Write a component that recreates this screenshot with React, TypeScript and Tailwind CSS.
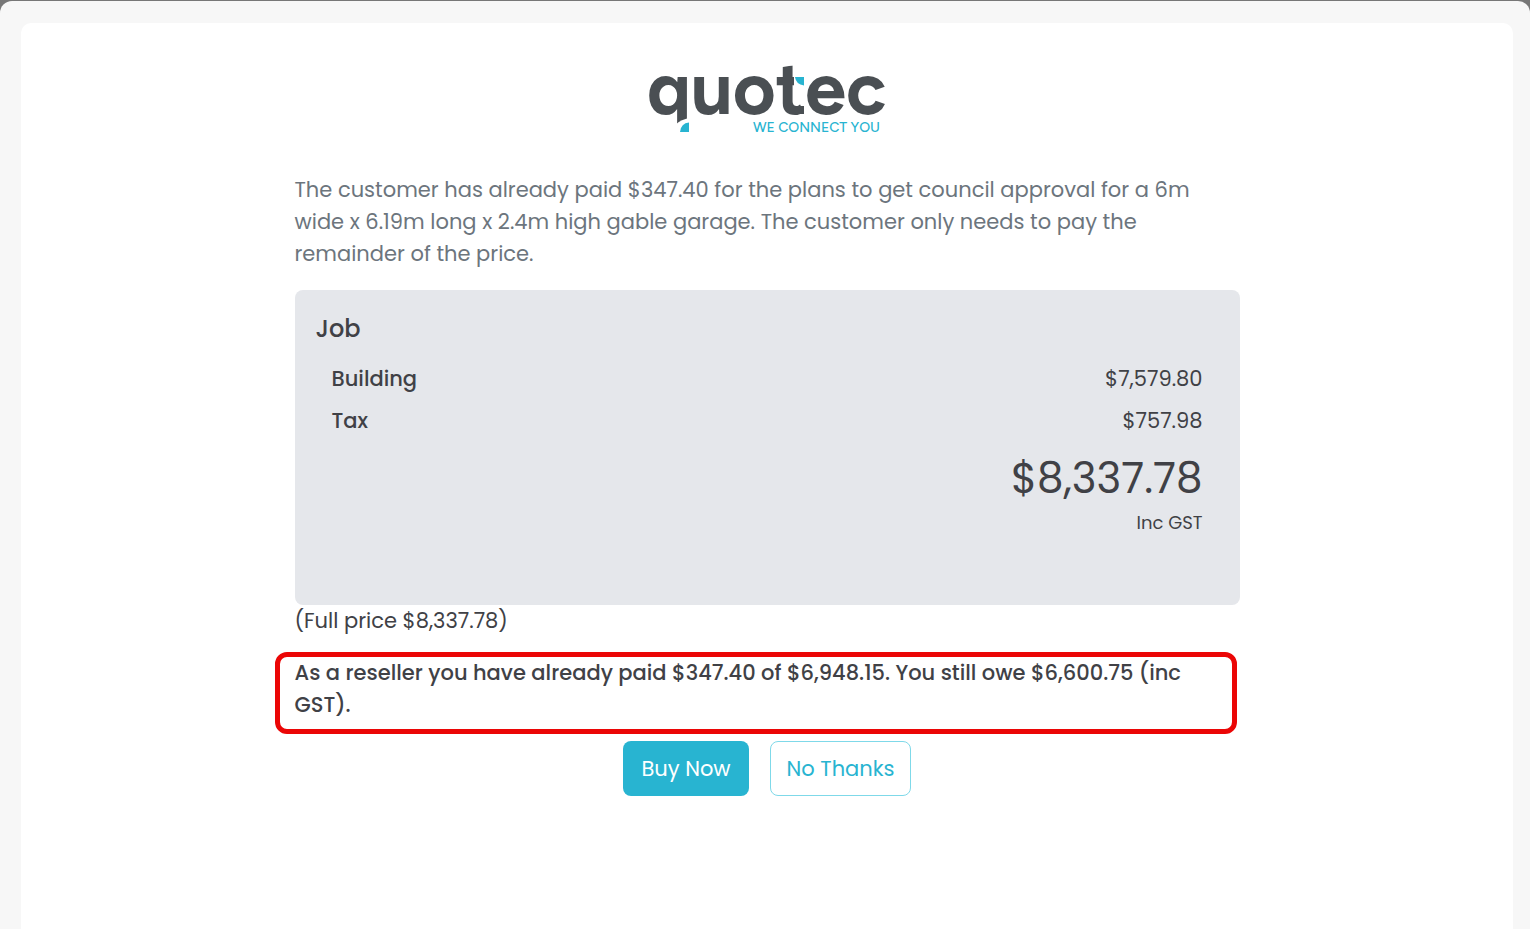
const rows = [
  { label: 'Building', amount: '$7,579.80' },
  { label: 'Tax', amount: '$757.98' },
];

function Logo() {
  return (
    <svg
      role="img"
      aria-label="quotec, we connect you"
      viewBox="0 0 260 100"
      className="mx-auto h-[100px] w-[260px]"
    >
      <text
        x="10"
        y="71"
        fontSize="74"
        fontWeight="700"
        fill="#4a4f53"
        className="font-['Figtree','Outfit','Nunito','Lato',sans-serif]"
      >
        quotec
      </text>
      {/* foot of the q */}
      <path d="M38 82Q44 76 54 75V92H38Z" fill="#fff" />
      <path d="M43 89Q44 80 52 79.500V89Z" fill="#28b4d1" />
      {/* slanted top, right arm and squared foot of the t */}
      <path d="M143 20L158 20V22L143 24.500Z" fill="#fff" />
      <path d="M157 31H168V45H157Z" fill="#fff" />
      <path d="M158 34h9v8.500Q159 41.500 158 34Z" fill="#28b4d1" />
      <path d="M158 63H167V71H158Z" fill="#4a4f53" />
      <text
        x="116"
        y="89"
        fontSize="14"
        fontWeight="500"
        fill="#28b4d1"
        className="font-['Figtree','Outfit','Lato',sans-serif]"
      >
        WE CONNECT YOU
      </text>
    </svg>
  );
}

export default function App() {
  return (
    <div className="min-h-screen bg-[#777] pt-px font-['Poppins','Inter',sans-serif] text-[21px] leading-8 text-[#404146]">
      <div className="flex min-h-[calc(100vh-1px)] flex-col rounded-t-xl bg-[#f7f7f7] pt-[22px] pr-[17px] pl-[21px]">
        <main className="grow rounded-t-[10px] bg-white px-6 pt-5 pb-8">
          <div className="mx-auto max-w-[945px]">
            <Logo />
            <p className="mt-[31px] text-[#6c757d]">
              The customer has already paid $347.40 for the plans to get council approval for a 6m wide x 6.19m long x
              2.4m high gable garage. The customer only needs to pay the remainder of the price.
            </p>

            <section className="mt-5 h-[315px] rounded-lg bg-[#e5e7eb] pt-[23px] pr-[37px] pl-[21px]">
              <h2 className="text-[24px] font-medium">Job</h2>
              <table className="mt-[13px] w-full">
                <tbody>
                  {rows.map((row) => (
                    <tr key={row.label} className="h-[42px]">
                      <th scope="row" className="pl-4 text-left font-medium">
                        {row.label}
                      </th>
                      <td className="text-right">{row.amount}</td>
                    </tr>
                  ))}
                </tbody>
              </table>
              <p className="mt-3 text-right text-[42px] leading-[50px]">$8,337.78</p>
              <p className="mt-[3px] text-right text-[18px]">Inc GST</p>
            </section>

            <p>(Full price $8,337.78)</p>
            <p className="mt-[15px] mr-[3px] -ml-5 rounded-xl border-5 border-[#eb0606] pt-0 pr-6 pb-2 pl-[15px] font-medium">
              As a reseller you have already paid $347.40 of $6,948.15. You still owe $6,600.75 (inc GST).
            </p>

            <div className="mt-[7px] flex justify-center gap-[21px]">
              <button type="button" className="h-[55px] w-[126px] rounded-lg bg-[#28b4d1] text-white">
                Buy Now
              </button>
              <button
                type="button"
                className="h-[55px] w-[141px] rounded-lg border border-[#7fd9e9] bg-white text-[#28b4d1]"
              >
                No Thanks
              </button>
            </div>
          </div>
        </main>
      </div>
    </div>
  );
}
